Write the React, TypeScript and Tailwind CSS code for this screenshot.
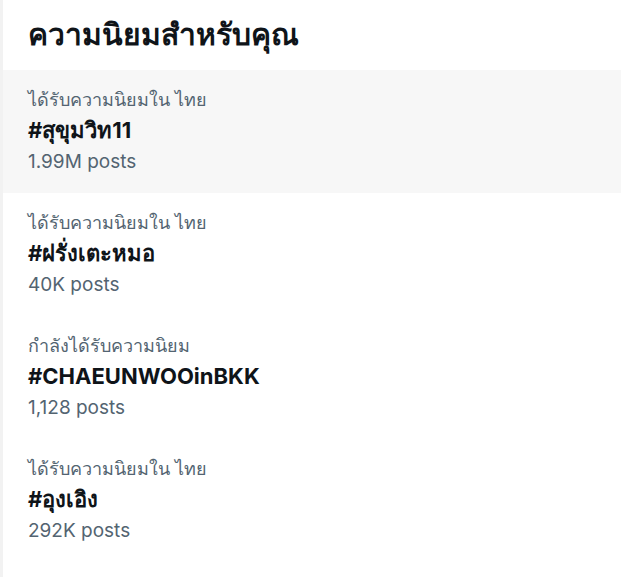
const trends = [
  { context: "ได้รับความนิยมใน ไทย", tag: "#สุขุมวิท11", posts: "1.99M posts", hover: true },
  { context: "ได้รับความนิยมใน ไทย", tag: "#ฝรั่งเตะหมอ", posts: "40K posts" },
  { context: "กำลังได้รับความนิยม", tag: "#CHAEUNWOOinBKK", posts: "1,128 posts" },
  { context: "ได้รับความนิยมใน ไทย", tag: "#อุงเอิง", posts: "292K posts" },
];

export default function App() {
  return (
    <div className="min-h-[577px] w-[621px] border-l-[3px] border-[#f2f2f2] bg-white font-['Inter','Noto_Sans',sans-serif]">
      <h2 className="px-[25px] pt-[14px] pb-[4px] text-[30px] font-bold leading-[40px] text-[#0f1419]">
        ความนิยมสำหรับคุณ
      </h2>
      <div className="mt-[12px]">
        {trends.map((t) => (
          <div
            key={t.tag}
            className={`h-[123px] px-[25px] pt-[15px] ${t.hover ? "bg-[#f7f7f7]" : ""}`}
          >
            <div className="text-[18px] leading-[30px] text-[#536471]">{t.context}</div>
            <div className="text-[22px] font-bold leading-[30px] text-[#0f1419]">{t.tag}</div>
            <div className="text-[19px] leading-[34px] text-[#536471]">{t.posts}</div>
          </div>
        ))}
      </div>
    </div>
  );
}
